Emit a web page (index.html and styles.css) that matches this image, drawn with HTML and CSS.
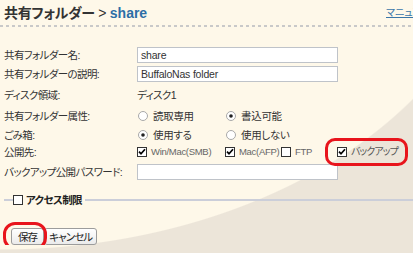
FILE: index.html
```html
<!DOCTYPE html>
<html>
<head>
    <title>共有フォルダー - share</title>
    <link rel="stylesheet" href="styles.css">
</head>
<body>
    <div class="header">
        <h1 class="title">共有フォルダー <span class="sep">&gt;</span> <span class="current">share</span></h1>
        <a class="manual" href="#">マニュアル</a>
    </div>

    <div class="form">
        <div class="label">共有フォルダー名:</div>
        <div class="value"><input type="text" class="text-box" value="share"></div>

        <div class="label">共有フォルダーの説明:</div>
        <div class="value"><input type="text" class="text-box" value="BuffaloNas folder"></div>

        <div class="label">ディスク領域:</div>
        <div class="value">ディスク1</div>

        <div class="label">共有フォルダー属性:</div>
        <div class="value radios">
            <span class="opt">
                <svg class="radio" viewBox="0 0 10 10"><circle cx="5" cy="5" r="4.5" fill="#fff" stroke="#a8a8a8"/></svg>読取専用
            </span>
            <span class="opt">
                <svg class="radio" viewBox="0 0 10 10"><circle cx="5" cy="5" r="4.5" fill="#fff" stroke="#a8a8a8"/><circle cx="5" cy="5" r="1.8" fill="#222"/></svg>書込可能
            </span>
        </div>

        <div class="label">ごみ箱:</div>
        <div class="value radios">
            <span class="opt">
                <svg class="radio" viewBox="0 0 10 10"><circle cx="5" cy="5" r="4.5" fill="#fff" stroke="#a8a8a8"/><circle cx="5" cy="5" r="1.8" fill="#222"/></svg>使用する
            </span>
            <span class="opt">
                <svg class="radio" viewBox="0 0 10 10"><circle cx="5" cy="5" r="4.5" fill="#fff" stroke="#a8a8a8"/></svg>使用しない
            </span>
        </div>

        <div class="label">公開先:</div>
        <div class="value checks">
            <span class="opt muted">
                <svg class="cb" viewBox="0 0 10 10"><rect x=".5" y=".5" width="9" height="9" fill="#fff" stroke="#333"/><path d="M2 4.6l2 2.2 4-4.6" fill="none" stroke="#000" stroke-width="1.7"/></svg>Win/Mac(SMB)
            </span>
            <span class="opt muted">
                <svg class="cb" viewBox="0 0 10 10"><rect x=".5" y=".5" width="9" height="9" fill="#fff" stroke="#333"/><path d="M2 4.6l2 2.2 4-4.6" fill="none" stroke="#000" stroke-width="1.7"/></svg>Mac(AFP)
            </span>
            <span class="opt muted">
                <svg class="cb" viewBox="0 0 10 10"><rect x=".5" y=".5" width="9" height="9" fill="#fff" stroke="#333"/></svg>FTP
            </span>
            <span class="opt backup marked">
                <svg class="cb" viewBox="0 0 10 10"><rect x=".5" y=".5" width="9" height="9" fill="#fff" stroke="#333"/><path d="M2 4.6l2 2.2 4-4.6" fill="none" stroke="#000" stroke-width="1.7"/></svg>バックアップ
            </span>
        </div>

        <div class="label">バックアップ公開パスワード:</div>
        <div class="value"><input type="password" class="text-box"></div>
    </div>

    <div class="section">
        <span class="rule-start"></span>
        <svg class="cb" viewBox="0 0 10 10"><rect x=".5" y=".5" width="9" height="9" fill="#fff" stroke="#333"/></svg>
        <span class="section-title">アクセス制限</span>
        <span class="rule"></span>
    </div>

    <div class="buttons">
        <button class="btn marked">保存</button>
        <button class="btn">キャンセル</button>
    </div>
</body>
</html>
```
FILE: styles.css
```css
html {
    height: 100%;
    overflow: hidden;
    background: radial-gradient(503px 350px at 0 -100px, #fef8e9 99.7%, #ece5d9 100%);
}
body {
    margin: 0;
    font-family: "Liberation Sans", "Noto Sans CJK JP", sans-serif;
    font-feature-settings: "palt";
    font-size: 10.5px;
    letter-spacing: -0.6px;
    line-height: 14px;
    color: #333;
}
.header {
    display: flex;
    align-items: center;
    height: 27px;
    box-sizing: border-box;
    padding: 0 0 2px 4px;
    background: repeating-linear-gradient(90deg, #c9c9c9 0 3px, transparent 3px 6px) left bottom / 100% 2px no-repeat;
}
.title {
    flex: 1;
    margin: 0;
    font-size: 14px;
    line-height: 18px;
    letter-spacing: -0.3px;
    font-weight: bold;
    color: #333;
}
.title .sep {
    font-weight: normal;
}
.title .current {
    color: #2c6ea6;
    letter-spacing: 0;
}
.manual {
    flex-shrink: 0;
    margin-right: -18px;
    font-size: 10px;
    letter-spacing: 0;
    color: #3a76a8;
    white-space: nowrap;
}
.form {
    display: grid;
    grid-template-columns: 137px 1fr;
    grid-template-rows: 18px 19px 23px 20px 17px 18px 21px;
    align-items: center;
    margin-top: 19px;
}
.label {
    padding-left: 4px;
    white-space: nowrap;
}
.value {
    white-space: nowrap;
}
.text-box {
    display: block;
    width: 201px;
    height: 16px;
    box-sizing: border-box;
    margin: 0;
    padding: 0 3px;
    border: 1px solid #bfc3c9;
    background: #fff;
    font-family: "Liberation Sans", sans-serif;
    font-size: 10.5px;
    letter-spacing: -0.2px;
    color: #333;
}
.radios {
    display: grid;
    grid-template-columns: 88px auto;
    padding-left: 1px;
    letter-spacing: -0.3px;
}
.checks {
    display: grid;
    grid-template-columns: 88px 56px 56px auto;
}
.opt {
    display: flex;
    align-items: center;
    gap: 5px;
}
.checks .opt {
    gap: 4px;
}
.opt.muted {
    font-size: 9.5px;
    letter-spacing: -0.3px;
    color: #666;
}
.backup {
    color: #555;
    justify-self: start;
    font-size: 10px;
    letter-spacing: -1px;
}
.radio, .cb {
    width: 10px;
    height: 10px;
    flex-shrink: 0;
}
.marked {
    position: relative;
}
.marked::after {
    content: "";
    position: absolute;
    border: 3px solid #e8141c;
    border-radius: 10px;
}
.backup.marked::after {
    left: -12px;
    right: -10px;
    top: -7px;
    bottom: -7px;
}
.section {
    display: flex;
    align-items: center;
    height: 14px;
    margin-top: 11px;
    padding-left: 4px;
}
.rule-start {
    width: 9px;
    height: 2px;
    background: #cbced9;
}
.section-title {
    margin: 0 3px 0 3px;
    font-weight: bold;
    color: #222;
}
.rule {
    flex: 1;
    height: 2px;
    background: #cbced9;
}
.buttons {
    display: flex;
    margin-top: 21px;
    padding-left: 11px;
}
.btn {
    height: 17px;
    margin: 0;
    padding: 0 4px;
    border: 1px solid #9c9c9c;
    border-radius: 3px;
    background: linear-gradient(#ffffff, #ebebeb);
    font-family: "Noto Sans CJK JP", sans-serif;
    font-feature-settings: "palt";
    font-size: 10.5px;
    letter-spacing: -0.9px;
    line-height: 14px;
    color: #222;
}
.btn.marked {
    padding: 0 6px;
}
.btn.marked::after {
    left: -9px;
    right: -4px;
    top: -7px;
    bottom: -6px;
    border-radius: 12px;
}
```
